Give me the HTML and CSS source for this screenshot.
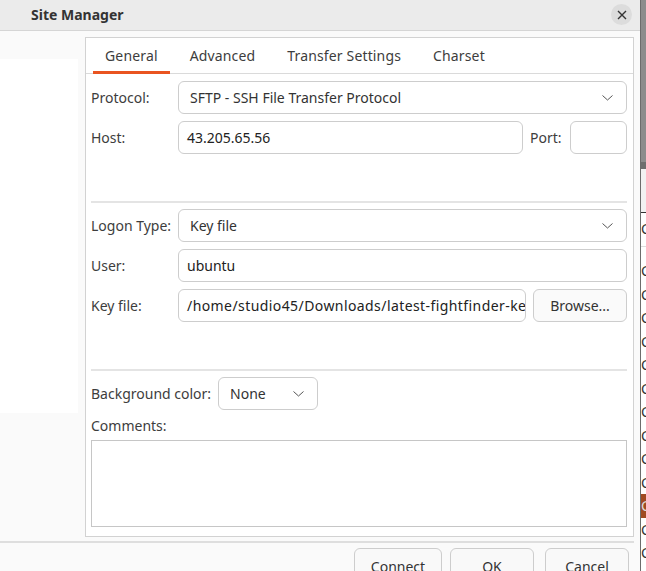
FILE: index.html
```html
<!DOCTYPE html>
<html>
<head>
<meta charset="utf-8">
<link rel="stylesheet" href="styles.css">
</head>
<body>
<div class="dialog">
  <div class="titlebar">
    <span class="title">Site Manager</span>
    <span class="close"><svg width="10" height="10" viewBox="0 0 10 10"><path d="M1 1L9 9M9 1L1 9" stroke="#333" stroke-width="1.4" fill="none"/></svg></span>
  </div>
  <div class="body">
    <div class="sitelist"></div>
    <div class="notebook">
      <div class="tabs">
        <div class="tab active">General</div>
        <div class="tab">Advanced</div>
        <div class="tab">Transfer Settings</div>
        <div class="tab">Charset</div>
      </div>
      <div class="page">
        <div class="row">
          <span class="label">Protocol:</span>
          <div class="field combo grow"><span class="val pad12">SFTP - SSH File Transfer Protocol</span><svg class="chev" width="11" height="6" viewBox="0 0 11 6"><path d="M0.5 0.5L5.5 5L10.5 0.5" stroke="#555" stroke-width="1" fill="none"/></svg></div>
        </div>
        <div class="row">
          <span class="label">Host:</span>
          <div class="field entry host"><span class="val">43.205.65.56</span></div>
          <span class="portlabel">Port:</span>
          <div class="field entry port"></div>
        </div>
        <div class="sep"></div>
        <div class="row">
          <span class="label">Logon Type:</span>
          <div class="field combo grow"><span class="val pad12">Key file</span><svg class="chev" width="11" height="6" viewBox="0 0 11 6"><path d="M0.5 0.5L5.5 5L10.5 0.5" stroke="#555" stroke-width="1" fill="none"/></svg></div>
        </div>
        <div class="row">
          <span class="label">User:</span>
          <div class="field entry grow"><span class="val">ubuntu</span></div>
        </div>
        <div class="row">
          <span class="label">Key file:</span>
          <div class="field entry keyfile"><span class="val clip">/home/studio45/Downloads/latest-fightfinder-key.pem</span></div>
          <div class="field button browse">Browse...</div>
        </div>
        <div class="sep"></div>
        <div class="row">
          <span class="label auto">Background color:</span>
          <div class="field combo bgsel"><span class="val pad12">None</span><svg class="chev" width="11" height="6" viewBox="0 0 11 6"><path d="M0.5 0.5L5.5 5L10.5 0.5" stroke="#555" stroke-width="1" fill="none"/></svg></div>
        </div>
        <div class="commentslabel">Comments:</div>
        <div class="comments"></div>
      </div>
    </div>
  </div>
  <div class="footsep"></div>
  <div class="buttons">
    <div class="btn connect">Connect</div>
    <div class="btn">OK</div>
    <div class="btn cancel">Cancel</div>
  </div>
</div>
<div class="behind">
  <div class="b-top"></div>
  <div class="b-band"></div>
  <div class="b-head"></div>
  <div class="b-colhead">C</div>
  <div class="b-list">
    <div class="b-item">C</div><div class="b-item">C</div><div class="b-item">C</div><div class="b-item">C</div><div class="b-item">C</div><div class="b-item">C</div><div class="b-item">C</div><div class="b-item">C</div><div class="b-item">C</div><div class="b-item">C</div><div class="b-item sel">C</div><div class="b-item">C</div><div class="b-item">C</div>
  </div>
</div>
</body>
</html>
```
FILE: styles.css
```css
* { box-sizing: border-box; }
html, body { margin: 0; padding: 0; }
body {
  width: 646px;
  height: 571px;
  overflow: hidden;
  display: flex;
  font-family: "Noto Sans", "Open Sans", sans-serif;
  font-size: 14px;
  color: #3d3d3d;
  background: #f6f6f6;
}
.dialog {
  width: 640px;
  height: 571px;
  flex: none;
  background: #fafafa;
  display: flex;
  flex-direction: column;
}
.titlebar {
  height: 31px;
  flex: none;
  background: #ebebeb;
  border-bottom: 1px solid #d5d5d5;
  display: flex;
  align-items: center;
  justify-content: space-between;
  padding: 0 8px 1px 31px;
}
.title { font-weight: bold; color: #333; font-size: 14px; }
.close {
  width: 21px; height: 21px; border-radius: 50%;
  background: #dcdcdc;
  display: flex; align-items: center; justify-content: center;
}
.body {
  display: flex;
  padding-top: 6px;
  gap: 7px;
  height: 506px;
  flex: none;
}
.sitelist {
  width: 78px;
  height: 354px;
  margin-top: 22px;
  background: #fff;
  flex: none;
}
.notebook {
  width: 549px;
  height: 500px;
  border: 1px solid #d2d2d2;
  background: #fff;
  flex: none;
  display: flex;
  flex-direction: column;
}
.tabs {
  height: 36px;
  border-bottom: 1px solid #dadada;
  display: flex;
  gap: 8px;
  padding-left: 7px;
  flex: none;
}
.tab {
  padding: 0 12px;
  line-height: 36px;
  height: 36px;
  color: #3d3d3d;
  letter-spacing: 0.15px;
}
.tab.active { box-shadow: inset 0 -3px 0 #e95420; }
.page {
  padding: 7px 6px 0 5px;
  display: flex;
  flex-direction: column;
}
.row {
  display: flex;
  align-items: center;
  height: 33px;
  margin-bottom: 7px;
}
.label { width: 87px; flex: none; }
.label.auto { width: auto; margin-right: 7px; }
.field {
  height: 33px;
  border: 1px solid #cdcdcd;
  border-radius: 6px;
  background: #fff;
  display: flex;
  align-items: center;
  color: #222;
}
.grow { flex: 1; }
.val { padding-left: 8px; white-space: nowrap; }
.val.pad12 { padding-left: 11px; color: #333; }
.combo { justify-content: space-between; padding-right: 13px; }
.chev { flex: none; }
.host { width: 345px; flex: none; }
.portlabel { margin: 0 8px 0 7px; }
.port { width: 57px; flex: none; }
.keyfile { width: 348px; flex: none; overflow: hidden; }
.clip {
  display: block;
  flex: 1;
  min-width: 0;
  overflow: hidden;
  letter-spacing: 0.42px;
}
.browse {
  width: 94px; margin-left: 7px; flex: none;
  justify-content: center;
  background: #fafafa;
  color: #333;
}
.bgsel { width: 100px; flex: none; }
.sep {
  height: 2px;
  background: #e4e4e4;
  margin: 40px 0 6px;
}
.commentslabel { height: 18px; line-height: 18px; margin-top: 0; }
.comments {
  margin-top: 5px;
  height: 87px;
  border: 1px solid #c6c6c6;
  background: #fff;
}
.footsep {
  height: 2px;
  background: #dedede;
  width: 634px;
  margin-top: 4px;
  flex: none;
}
.buttons {
  display: flex;
  justify-content: flex-end;
  gap: 8px;
  padding: 5px 11px 0 0;
}
.btn {
  height: 36px;
  width: 84px;
  border: 1px solid #cdcdcd;
  border-radius: 6px;
  background: #f9f9f9;
  display: flex;
  align-items: center;
  justify-content: center;
  color: #333;
  padding-top: 0;
}
.btn.connect { width: 88px; }
.btn.cancel { margin-left: 3px; }
.behind {
  width: 6px;
  flex: none;
  border-left: 1px solid #6c6c6c;
  display: flex;
  flex-direction: column;
  background: #fff;
}
.b-top { height: 162px; background: #8c8c8c; flex: none; }
.b-band { height: 7px; background: #6e6e6e; flex: none; }
.b-head { height: 44px; background: #f2f2f2; border-bottom: 1px solid #333; flex: none; }
.b-colhead { height: 34px; line-height: 32px; color: #333; border-bottom: 1px solid #ddd; flex: none; }
.b-list { padding-top: 12px; }
.b-item { height: 23.5px; line-height: 23.5px; color: #333; font-size: 14px; }
.b-item.sel { background: #a04a22; color: #ddd; }
```
